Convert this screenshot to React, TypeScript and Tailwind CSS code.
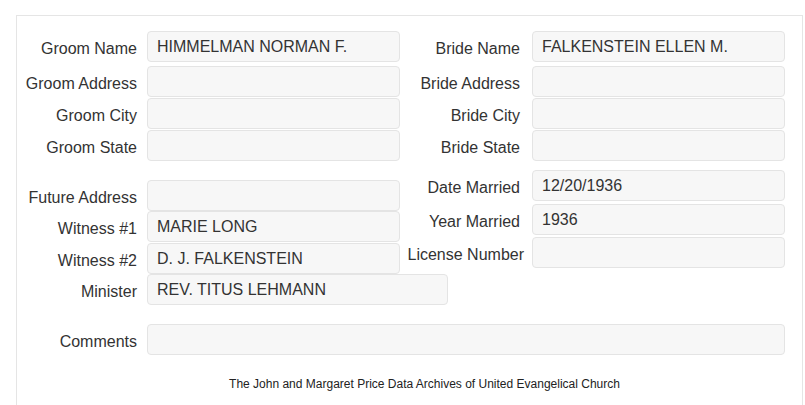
import React from "react";

const font = { fontFamily: '"Liberation Sans", Arial, Helvetica, sans-serif' };

function Field({
  label,
  value,
  labelW,
  gap,
  inputW,
  extra = "",
}: {
  label: string;
  value?: string;
  labelW: string;
  gap: string;
  inputW: string;
  extra?: string;
}) {
  return (
    <div className={`flex items-center ${extra}`}>
      <div className={`${labelW} text-right text-[16px] leading-[18px] text-[#333] pt-[4px] whitespace-nowrap`}>{label}</div>
      <div
        className={`${gap} ${inputW} h-[31px] rounded-[4px] border border-[#e4e4e4] bg-[#f7f7f7] pl-[9px] flex items-center text-[16px] leading-[18px] text-[#333] whitespace-nowrap`}
      >
        {value}
      </div>
    </div>
  );
}

export default function App() {
  return (
    <div className="w-[805px] h-[405px] overflow-hidden bg-white pl-[16px] pt-[15px]" style={font}>
      <div className="w-[787px] h-[420px] border border-[#e5e5e5]">
        {/* Top section */}
        <div className="flex pt-[15px]">
          <div className="flex flex-col">
            <Field label="Groom Name" value="HIMMELMAN NORMAN F." labelW="w-[120px]" gap="ml-[10px]" inputW="w-[253px]" />
            <Field label="Groom Address" labelW="w-[120px]" gap="ml-[10px]" inputW="w-[253px]" extra="mt-[4px]" />
            <Field label="Groom City" labelW="w-[120px]" gap="ml-[10px]" inputW="w-[253px]" extra="mt-[1px]" />
            <Field label="Groom State" labelW="w-[120px]" gap="ml-[10px]" inputW="w-[253px]" extra="mt-[1px]" />
          </div>
          <div className="flex flex-col">
            <Field label="Bride Name" value="FALKENSTEIN ELLEN M." labelW="w-[120px]" gap="ml-[12px]" inputW="w-[253px]" />
            <Field label="Bride Address" labelW="w-[120px]" gap="ml-[12px]" inputW="w-[253px]" extra="mt-[4px]" />
            <Field label="Bride City" labelW="w-[120px]" gap="ml-[12px]" inputW="w-[253px]" extra="mt-[1px]" />
            <Field label="Bride State" labelW="w-[120px]" gap="ml-[12px]" inputW="w-[253px]" extra="mt-[1px]" />
          </div>
        </div>

        {/* Second section */}
        <div className="flex items-start">
          <div className="flex flex-col mt-[19px]">
            <Field label="Future Address" labelW="w-[120px]" gap="ml-[10px]" inputW="w-[253px]" />
            <Field label="Witness #1" value="MARIE LONG" labelW="w-[120px]" gap="ml-[10px]" inputW="w-[253px]" />
            <Field label="Witness #2" value="D. J. FALKENSTEIN" labelW="w-[120px]" gap="ml-[10px]" inputW="w-[253px]" extra="mt-[1px]" />
            <Field label="Minister" value="REV. TITUS LEHMANN" labelW="w-[120px]" gap="ml-[10px]" inputW="w-[301px]" />
          </div>
          <div className="flex flex-col mt-[9px] ml-[-48px]">
            <Field label="Date Married" value="12/20/1936" labelW="w-[120px]" gap="ml-[12px]" inputW="w-[253px]" />
            <Field label="Year Married" value="1936" labelW="w-[120px]" gap="ml-[12px]" inputW="w-[253px]" extra="mt-[3px]" />
            <Field label="License Number" labelW="w-[124px]" gap="ml-[8px]" inputW="w-[253px]" extra="mt-[2px]" />
          </div>
        </div>

        {/* Comments */}
        <div className="mt-[19px]">
          <Field label="Comments" labelW="w-[120px]" gap="ml-[10px]" inputW="w-[638px]" />
        </div>

        {/* Footer */}
        <div className="mt-[22px] pl-[30px] flex justify-center text-[12px] leading-[14px] text-[#222]">
          The John and Margaret Price Data Archives of United Evangelical Church
        </div>
      </div>
    </div>
  );
}
